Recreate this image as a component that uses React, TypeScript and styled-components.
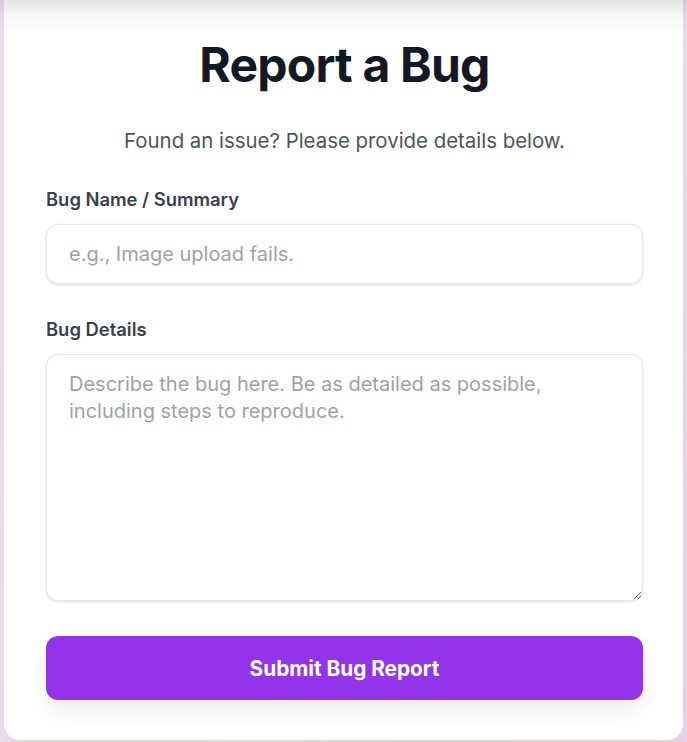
import React, { useState } from 'react';
import styled, { createGlobalStyle } from 'styled-components';

const GlobalStyle = createGlobalStyle`
  * {
    box-sizing: border-box;
  }

  html, body {
    margin: 0;
    padding: 0;
  }

  body {
    font-family: Inter, 'Noto Sans', sans-serif;
    background: linear-gradient(135deg, #efe6f2 0%, #ede1ee 60%, #e9d6e6 100%);
  }
`;

const Page = styled.main`
  position: relative;
  display: flex;
  justify-content: center;
  align-items: flex-end;
  height: 100vh;
  padding-bottom: 2px;
  overflow: hidden;

  /* soft shade along the top edge of the window */
  &::before {
    content: '';
    position: absolute;
    top: 0;
    left: 0;
    right: 0;
    height: 34px;
    background: linear-gradient(to bottom, rgba(0, 0, 0, 0.1), rgba(0, 0, 0, 0.03) 45%, rgba(0, 0, 0, 0));
    pointer-events: none;
  }
`;

const Card = styled.section`
  flex-shrink: 0;
  width: 679px;
  background: #ffffff;
  border-radius: 16px;
  padding: 60px 40px 40px 42px;
  box-shadow: 0 10px 30px rgba(0, 0, 0, 0.06);
`;

const Title = styled.h1`
  margin: 0;
  text-align: center;
  font-size: 48px;
  font-weight: 700;
  letter-spacing: -0.8px;
  color: #111827;
`;

const Subtitle = styled.p`
  margin: 34px 0 0;
  text-align: center;
  font-size: 20.4px;
  color: #4b5563;
`;

const Form = styled.form`
  display: flex;
  flex-direction: column;
  margin-top: 35px;
`;

const Field = styled.div<{ gap: number }>`
  display: flex;
  flex-direction: column;
  margin-bottom: ${p => p.gap}px;
`;

const Label = styled.label`
  font-size: 18.4px;
  font-weight: 600;
  color: #374151;
  margin-bottom: 14px;
`;

const inputBase = `
  width: 100%;
  border: 1px solid #e5e7eb;
  border-radius: 12px;
  background: #fff;
  font-family: Inter, 'Noto Sans', sans-serif;
  font-size: 20px;
  color: #111827;
  box-shadow: 0 1px 3px rgba(0, 0, 0, 0.12);
  outline: none;

  &::placeholder {
    color: #9ca3af;
  }
`;

const TextInput = styled.input`
  ${inputBase}
  height: 60px;
  padding: 0 22px;
`;

const TextArea = styled.textarea`
  ${inputBase}
  height: 247px;
  padding: 16px 22px;
  line-height: 1.35;
  resize: vertical;
`;

const SubmitButton = styled.button`
  height: 64px;
  margin-top: 4px;
  border: none;
  border-radius: 12px;
  background: #9333ea;
  color: #fff;
  font-family: Inter, 'Noto Sans', sans-serif;
  font-size: 20.8px;
  font-weight: 700;
  cursor: pointer;
  box-shadow: 0 10px 20px rgba(0, 0, 0, 0.08);
`;

const App: React.FC = () => {
  const [name, setName] = useState('');
  const [details, setDetails] = useState('');

  return (
    <>
      <GlobalStyle />
      <Page>
        <Card>
          <Title>Report a Bug</Title>
          <Subtitle>Found an issue? Please provide details below.</Subtitle>
          <Form onSubmit={e => e.preventDefault()}>
            <Field gap={34}>
              <Label htmlFor="bug-name">Bug Name / Summary</Label>
              <TextInput
                id="bug-name"
                value={name}
                onChange={e => setName(e.target.value)}
                placeholder="e.g., Image upload fails."
              />
            </Field>
            <Field gap={31}>
              <Label htmlFor="bug-details">Bug Details</Label>
              <TextArea
                id="bug-details"
                value={details}
                onChange={e => setDetails(e.target.value)}
                placeholder="Describe the bug here. Be as detailed as possible, including steps to reproduce."
              />
            </Field>
            <SubmitButton type="submit">Submit Bug Report</SubmitButton>
          </Form>
        </Card>
      </Page>
    </>
  );
};

export default App;
